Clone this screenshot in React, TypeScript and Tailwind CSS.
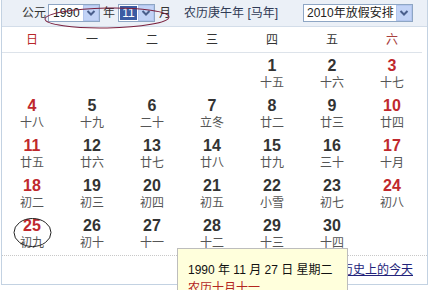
import React from "react";

const FONT = "font-['Liberation_Sans','Noto_Sans_CJK_SC',sans-serif]";

type Day = { d: number; l: string; we?: boolean } | null;

const rows: Day[][] = [
  [null, null, null, null, { d: 1, l: "十五" }, { d: 2, l: "十六" }, { d: 3, l: "十七", we: true }],
  [
    { d: 4, l: "十八", we: true },
    { d: 5, l: "十九" },
    { d: 6, l: "二十" },
    { d: 7, l: "立冬" },
    { d: 8, l: "廿二" },
    { d: 9, l: "廿三" },
    { d: 10, l: "廿四", we: true },
  ],
  [
    { d: 11, l: "廿五", we: true },
    { d: 12, l: "廿六" },
    { d: 13, l: "廿七" },
    { d: 14, l: "廿八" },
    { d: 15, l: "廿九" },
    { d: 16, l: "三十" },
    { d: 17, l: "十月", we: true },
  ],
  [
    { d: 18, l: "初二", we: true },
    { d: 19, l: "初三" },
    { d: 20, l: "初四" },
    { d: 21, l: "初五" },
    { d: 22, l: "小雪" },
    { d: 23, l: "初七" },
    { d: 24, l: "初八", we: true },
  ],
  [
    { d: 25, l: "初九", we: true },
    { d: 26, l: "初十" },
    { d: 27, l: "十一" },
    { d: 28, l: "十二" },
    { d: 29, l: "十三" },
    { d: 30, l: "十四" },
    null,
  ],
];

function Arrow() {
  return (
    <div className="w-[16px] h-[16px] bg-[#c2d3f6] border border-[#b3c6ee] flex items-center justify-center">
      <svg width="10" height="8" viewBox="0 0 10 8">
        <path d="M1.5 2 L5 5.5 L8.5 2" fill="none" stroke="#4a5f8c" strokeWidth="2" />
      </svg>
    </div>
  );
}

const weekdays = ["日", "一", "二", "三", "四", "五", "六"];

export default function App() {
  return (
    <div className={`w-[430px] h-[290px] bg-white relative overflow-hidden ${FONT}`}>
      <div className="ml-[1px] w-[427px] border-x border-b border-[#c3d2e2]">
        {/* header */}
        <div className="h-[27px] bg-[#ebf0f7] border-b border-[#d3dde9] flex items-center pl-[20px] pr-[14px] text-[12px] text-[#333]">
          <span>公元</span>
          <div className="ml-[2px] w-[52px] h-[18px] bg-white border border-[#8ea6c4] flex items-center justify-between pl-[4px] pr-[0px]">
            <span className="text-[12px] text-[#222]">1990</span>
            <Arrow />
          </div>
          <span className="ml-[3px]">年</span>
          <div className="ml-[3px] w-[37px] h-[18px] bg-white border border-[#8ea6c4] flex items-center justify-between pl-[1px]">
            <span className="w-[17px] h-[14px] bg-[#3b5ca3] text-white text-[12px] leading-[14px] text-center">11</span>
            <Arrow />
          </div>
          <span className="ml-[4px]">月</span>
          <span className="ml-[13px] text-[#2f3a55]">农历庚午年 [马年]</span>
          <div className="ml-auto w-[110px] h-[18px] bg-white border border-[#8ea6c4] flex items-center justify-between pl-[3px]">
            <span className="text-[12px] text-[#222]">2010年放假安排</span>
            <Arrow />
          </div>
        </div>
        {/* weekdays */}
        <div className="w-[420px] h-[26px] grid grid-cols-7 items-center border-b border-[#dde3ea] text-[12px]">
          {weekdays.map((w, i) => (
            <div
              key={w}
              className={`text-center ${i === 0 ? "text-[#b8262a]" : i === 6 ? "text-[#a8403e]" : "text-[#333]"}`}
            >
              {w}
            </div>
          ))}
        </div>
        {/* days */}
        <div className="pb-[2px] border-b border-dotted border-[#c8c8c8]">
          {rows.map((r, ri) => (
            <div key={ri} className="w-[420px] h-[40px] grid grid-cols-7">
              {r.map((c, ci) => (
                <div key={ci} className="pt-[4px] flex flex-col items-center">
                  {c && (
                    <>
                      <span
                        className={`h-[17px] leading-[17px] text-[16px] font-bold ${c.we ? "text-[#c0282d]" : "text-[#333]"}`}
                      >
                        {c.d}
                      </span>
                      <span className="h-[18px] leading-[18px] text-[12px] text-[#555]">{c.l}</span>
                    </>
                  )}
                </div>
              ))}
            </div>
          ))}
        </div>
        {/* footer */}
        <div className="h-[28px] flex items-center justify-end pr-[14px]">
          <a className="text-[12px] text-[#22227a] underline">历史上的今天</a>
        </div>
      </div>

      {/* tooltip */}
      <div className="absolute left-[177px] top-[248px] w-[171px] h-[60px] bg-[#ffffdc] border border-[#bdbdbd] pl-[10px] pt-[12px] text-[12px] leading-[18px]">
        <div className="text-[#111]">1990 年 11 月 27 日 星期二</div>
        <div className="text-[#b3261e]">农历十月十一</div>
      </div>

      {/* hand-drawn annotations */}
      <svg className="absolute left-0 top-0 pointer-events-none" width="430" height="290">
        <ellipse cx="107" cy="18" rx="62" ry="10" fill="none" stroke="#7a1f3d" strokeWidth="1" transform="rotate(-1 107 18)" />
        <ellipse cx="32.5" cy="232.5" rx="18.5" ry="14" fill="none" stroke="#222" strokeWidth="1" />
      </svg>
    </div>
  );
}
